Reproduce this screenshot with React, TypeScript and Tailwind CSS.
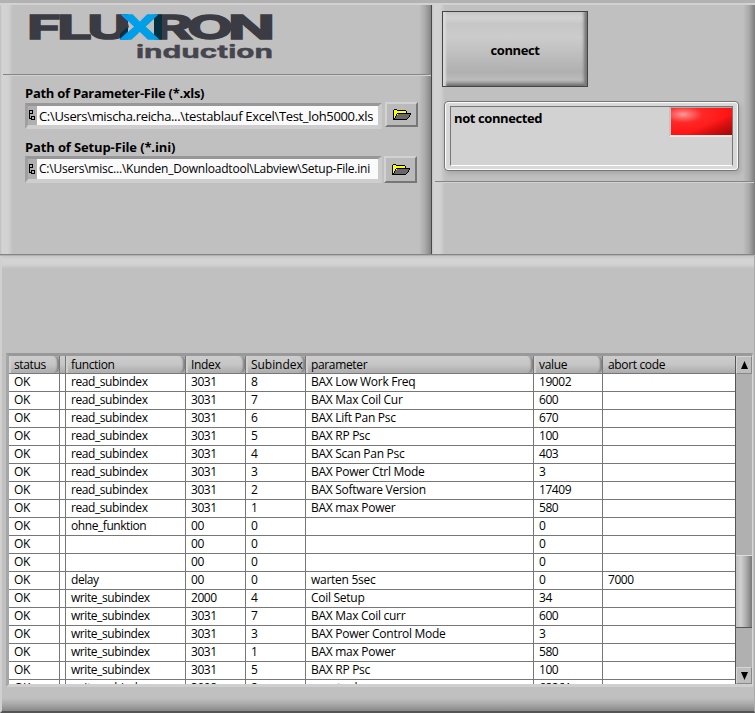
import React from 'react';

type Row = [string, string, string, string, string, string, string];

const rows: Row[] = [
  ['OK', 'read_subindex', '3031', '8', 'BAX Low Work Freq', '19002', ''],
  ['OK', 'read_subindex', '3031', '7', 'BAX Max Coil Cur', '600', ''],
  ['OK', 'read_subindex', '3031', '6', 'BAX Lift Pan Psc', '670', ''],
  ['OK', 'read_subindex', '3031', '5', 'BAX RP Psc', '100', ''],
  ['OK', 'read_subindex', '3031', '4', 'BAX Scan Pan Psc', '403', ''],
  ['OK', 'read_subindex', '3031', '3', 'BAX Power Ctrl Mode', '3', ''],
  ['OK', 'read_subindex', '3031', '2', 'BAX Software Version', '17409', ''],
  ['OK', 'read_subindex', '3031', '1', 'BAX max Power', '580', ''],
  ['OK', 'ohne_funktion', '00', '0', '', '0', ''],
  ['OK', '', '00', '0', '', '0', ''],
  ['OK', '', '00', '0', '', '0', ''],
  ['OK', 'delay', '00', '0', 'warten 5sec', '0', '7000'],
  ['OK', 'write_subindex', '2000', '4', 'Coil Setup', '34', ''],
  ['OK', 'write_subindex', '3031', '7', 'BAX Max Coil curr', '600', ''],
  ['OK', 'write_subindex', '3031', '3', 'BAX Power Control Mode', '3', ''],
  ['OK', 'write_subindex', '3031', '1', 'BAX max Power', '580', ''],
  ['OK', 'write_subindex', '3031', '5', 'BAX RP Psc', '100', ''],
  ['OK', 'write_subindex', '3008', '2', 'max tank curr', '62261', ''],
];

const gridCols = 'grid grid-cols-[51px_6px_120px_60px_60px_228px_69px_132px]';
const headers = ['status', '', 'function', 'Index', 'Subindex', 'parameter', 'value', 'abort code'];

const letters: { ch: string; x: number; w: number }[] = [
  { ch: 'F', x: -2, w: 34 },
  { ch: 'L', x: 28, w: 35 },
  { ch: 'U', x: 58, w: 43 },
  { ch: 'R', x: 124, w: 40 },
  { ch: 'O', x: 158, w: 46 },
  { ch: 'N', x: 199, w: 47 },
];

function Logo() {
  return (
    <svg width="250" height="50" viewBox="0 0 250 50" className="block overflow-visible" fontFamily="Inter, sans-serif" fontWeight="700">
      <g fontSize="33" fill="#3b3b43" stroke="#3b3b43" strokeWidth="1.4">
        {letters.map((l) => (
          <text key={l.ch} x={l.x} y="26" textLength={l.w} lengthAdjust="spacingAndGlyphs">
            {l.ch}
          </text>
        ))}
      </g>
      <path d="M91 1.500h8v25h-8zM125 1.500h8v25h-8z" fill="#062f40" />
      <path d="M97 1.500h-6v14l9-1zM91 21l7-7v-2l-7 4z" fill="#3b3b43" />
      <text x="91" y="26" fontSize="33" fill="#009fe8" stroke="#009fe8" strokeWidth="1.400" textLength="39" lengthAdjust="spacingAndGlyphs">
        X
      </text>
      <text x="107" y="44.500" fontSize="17.500" fill="#45454e" stroke="#45454e" strokeWidth="0.400" textLength="137" lengthAdjust="spacingAndGlyphs">
        induction
      </text>
    </svg>
  );
}

function Folder() {
  return (
    <svg width="20" height="13" viewBox="0 0 20 13" shapeRendering="crispEdges" className="block">
      <path d="M1 11V2h1V1h3v1h1v1h8v3H6l-5 6z" fill="#ffff00" />
      <path d="M2 12l4-6h13l-4 6z" fill="#686868" />
      <path d="M1 2h1v10h-1zM2 1h3v1h-3zM5 2h9v1h-9zM14 3h1v2h-1zM5 5h14v1h-14zM2 11h13v1h-13zM4 6h1v2h-1zM3 8h1v2h-1zM2 10h1v1h-1zM18 6h1v1h-1zM17 7h1v2h-1zM16 9h1v1h-1zM15 10h1v1h-1z" fill="#000" />
    </svg>
  );
}

function PathField({ label, labelCls, value, text, h, btn }: { label: string; labelCls: string; value: string; text: string; h: string; btn: string }) {
  return (
    <div>
      <div className={`h-[17px] text-[13px] font-bold leading-[17px] ${labelCls}`}>{label}</div>
      <div className="flex items-start">
        <div className={`flex border-b-[4px] border-l-[3px] border-r-[4px] border-t-[3px] border-b-[#cecece] border-l-[#a0a0a0] border-r-[#cacaca] border-t-[#979797] ${h}`}>
          <div className="flex w-[9px] items-center justify-start bg-[#b0b0b0]">
            <svg width="7" height="11" viewBox="0 0 7 11" shapeRendering="crispEdges">
              <path d="M1.500 .5h3v3h-3zM3.500 6.500h3v3h-3zM1.500 4v4.500h2" fill="none" stroke="#000" />
            </svg>
          </div>
          <div className={`flex w-[341px] items-center whitespace-nowrap bg-[#fafafa] pl-[2px] ${text}`}>{value}</div>
        </div>
        <div className={`flex w-[33px] items-center justify-center border-2 border-b-[#777] border-l-[#d2d2d2] border-r-[#777] border-t-[#d2d2d2] bg-[#bababa] ${btn}`}>
          <Folder />
        </div>
      </div>
    </div>
  );
}

const panelSides =
  'bg-[linear-gradient(to_right,#bebebe_0px,#d3d3d3_2px,#d2d2d2_8px,#c0c0c0_13px,#c0c0c0_calc(100%-13px),#aaa_calc(100%-7px),#858585_calc(100%-1px),#484848_calc(100%-1px),#484848_100%)]';
const panelSidesRight =
  'bg-[linear-gradient(to_right,#c4c4c4_0px,#d3d3d3_2px,#d2d2d2_8px,#c0c0c0_13px,#c0c0c0_calc(100%-12px),#aaa_calc(100%-6px),#7c7c7c_100%)]';

function Divider() {
  return <div className="ml-[3px] mr-[1px] h-[2px] border-b border-t border-b-[#d2d2d2] border-t-[#858585]" />;
}

export default function App() {
  return (
    <div className="flex h-[713px] w-[755px] flex-col overflow-hidden bg-[#b2b2b2] font-['Open_Sans','Noto_Sans',sans-serif] text-[12px] text-black">
      <div className="flex h-[256px] pt-[3px]">
        <section className={`flex h-[252px] w-[432px] flex-col border-b border-t-2 border-b-[#848484] border-t-[#d2d2d2] ${panelSides}`}>
          <div className="h-[69px] pl-[29px] pt-[8px]">
            <Logo />
          </div>
          <Divider />
          <div className="flex flex-col gap-[10px] pl-[25px] pt-[9px]">
            <PathField
              label="Path of Parameter-File (*.xls)"
              labelCls="tracking-[-0.27px]"
              value={'C:\\Users\\mischa.reicha...\\testablauf Excel\\Test_loh5000.xls'}
              h="mt-px h-[26px]"
              text="pt-[2px] text-[13px] tracking-[-0.33px]"
              btn="ml-[3px] h-[25px]"
            />
            <PathField
              label="Path of Setup-File (*.ini)"
              labelCls="tracking-[-0.13px]"
              value={'C:\\Users\\misc...\\Kunden_Downloadtool\\Labview\\Setup-File.ini'}
              h="h-[27px]"
              text="text-[12px] tracking-[-0.22px]"
              btn="ml-[2px] h-[27px]"
            />
          </div>
        </section>

        <section className={`flex h-[252px] w-[323px] flex-col border-b border-t-2 border-b-[#848484] border-t-[#d2d2d2] ${panelSidesRight}`}>
          <button className="ml-[10px] mt-[6px] flex h-[76px] w-[146px] items-center justify-center border border-[#454545] bg-[linear-gradient(to_bottom,#c8c8c8,#d2d2d2_6px,#c6c6c6_12px,#cccccc_25px,#b0b0b0_60px,#bcbcbc_68px,#999_71px,#666_100%)] pt-[3px] text-[13px] font-bold tracking-[-0.4px] shadow-[inset_4px_0_2px_-1px_#d8d8d8,inset_-5px_0_3px_-2px_#787878]">
            connect
          </button>
          <div className="ml-[12px] mt-[14px] h-[70px] w-[295px] rounded-[4px] border border-[#777] bg-[#d8d8d8] px-[5px] pb-[3px] pt-[4px] shadow-[inset_0_0_1px_1px_#fff,2px_3px_4px_#aaa]">
            <div className="flex h-[60px] justify-between border border-b-[#fff] border-l-[#777] border-r-[#777] border-t-[#777] bg-[#d2d2d2]">
              <span className="pl-[3px] pt-[2px] text-[13px] font-bold leading-[18px] tracking-[-0.4px]">not connected</span>
              <div className="h-[30px] w-[63px] border-b-2 border-l-2 border-t border-b-[#e8e8e8] border-l-[#c4c4c4] border-t-[#aaa] bg-[linear-gradient(to_bottom_right,transparent_60%,#a00808_100%),radial-gradient(ellipse_at_20%_24%,#ff9c9c_0,#ff6464_12%,#ff2828_28%,#ff1414_65%,#ee1212_100%)]" />
            </div>
          </div>
          <div className="mt-[10px]">
            <Divider />
          </div>
        </section>
      </div>

      <section className="flex h-[457px] flex-col border-b-2 border-l-2 border-r border-b-[#555] border-l-[#d0d0d0] border-r-[#aaa] bg-[linear-gradient(to_bottom,#c8c8c8_0px,#d4d4d4_4px,#d2d2d2_8px,#c0c0c0_13px,#c0c0c0_442px,#aaa_448px,#888_100%)] pl-[4px] pt-[97px]">
        <div className="flex h-[334px] w-[747px] border-b-[3px] border-l-[3px] border-r border-t-[3px] border-b-[#cfcfcf] border-l-[#a6a6a6] border-r-[#d8d8d8] border-t-[#999]">
          <div className="h-[328px] w-[726px] overflow-hidden bg-white">
            <div className={`${gridCols} h-[18px] border-b border-[#777]`}>
              {headers.map((h, i) => (
                <div key={i} className={`bg-[#a8a8a8] ${i === 7 ? '' : 'border-r border-[#777]'}`}>
                  <div
                    className={`h-[17px] whitespace-nowrap bg-[linear-gradient(to_bottom,#cdcdcd,#c5c5c5_50%,#ababab)] pl-[5px] leading-[17px] ${
                      i === 4 ? 'tracking-[-0.05px]' : 'tracking-[-0.35px]'
                    } ${i === 1 || i === 7 ? '' : 'rounded-r-[5px] shadow-[inset_-4px_0_2px_-2px_#808080,inset_2px_0_1px_#d0d0d0]'}`}
                  >
                    {h}
                  </div>
                </div>
              ))}
            </div>
            {rows.map((r, ri) => (
              <div key={ri} className={`${gridCols} h-[18px] border-b border-[#777]`}>
                {[r[0], '', ...r.slice(1)].map((c, i) => (
                  <div
                    key={i}
                    className={`h-[17px] whitespace-nowrap pl-[5px] leading-[16px] ${i === 5 ? 'tracking-[-0.28px]' : 'tracking-[-0.43px]'} ${
                      i === 7 ? '' : 'border-r border-[#777]'
                    }`}
                  >
                    {c}
                  </div>
                ))}
              </div>
            ))}
          </div>
          <div className="flex w-[17px] flex-col border-l border-[#555] bg-[#b0b0b0]">
            <div className="flex h-[18px] items-center justify-center border border-b-[#888] border-l-[#d5d5d5] border-r-[#888] border-t-[#d5d5d5] bg-[#bebebe]">
              <svg width="7" height="8" viewBox="0 0 7 8"><path d="M3.500 0L7 8H0z" /></svg>
            </div>
            <div className="mt-[181px] h-[73px] border-b border-t border-b-[#555] border-t-[#ddd] bg-[linear-gradient(to_right,#c0c0c0,#d0d0d0_30%,#aaa_65%,#777)]" />
            <div className="mt-[39px] flex h-[17px] items-center justify-center border border-b-[#888] border-l-[#d5d5d5] border-r-[#888] border-t-[#d5d5d5] bg-[#bebebe]">
              <svg width="7" height="8" viewBox="0 0 7 8"><path d="M0 0h7L3.500 8z" /></svg>
            </div>
          </div>
        </div>
      </section>
    </div>
  );
}
